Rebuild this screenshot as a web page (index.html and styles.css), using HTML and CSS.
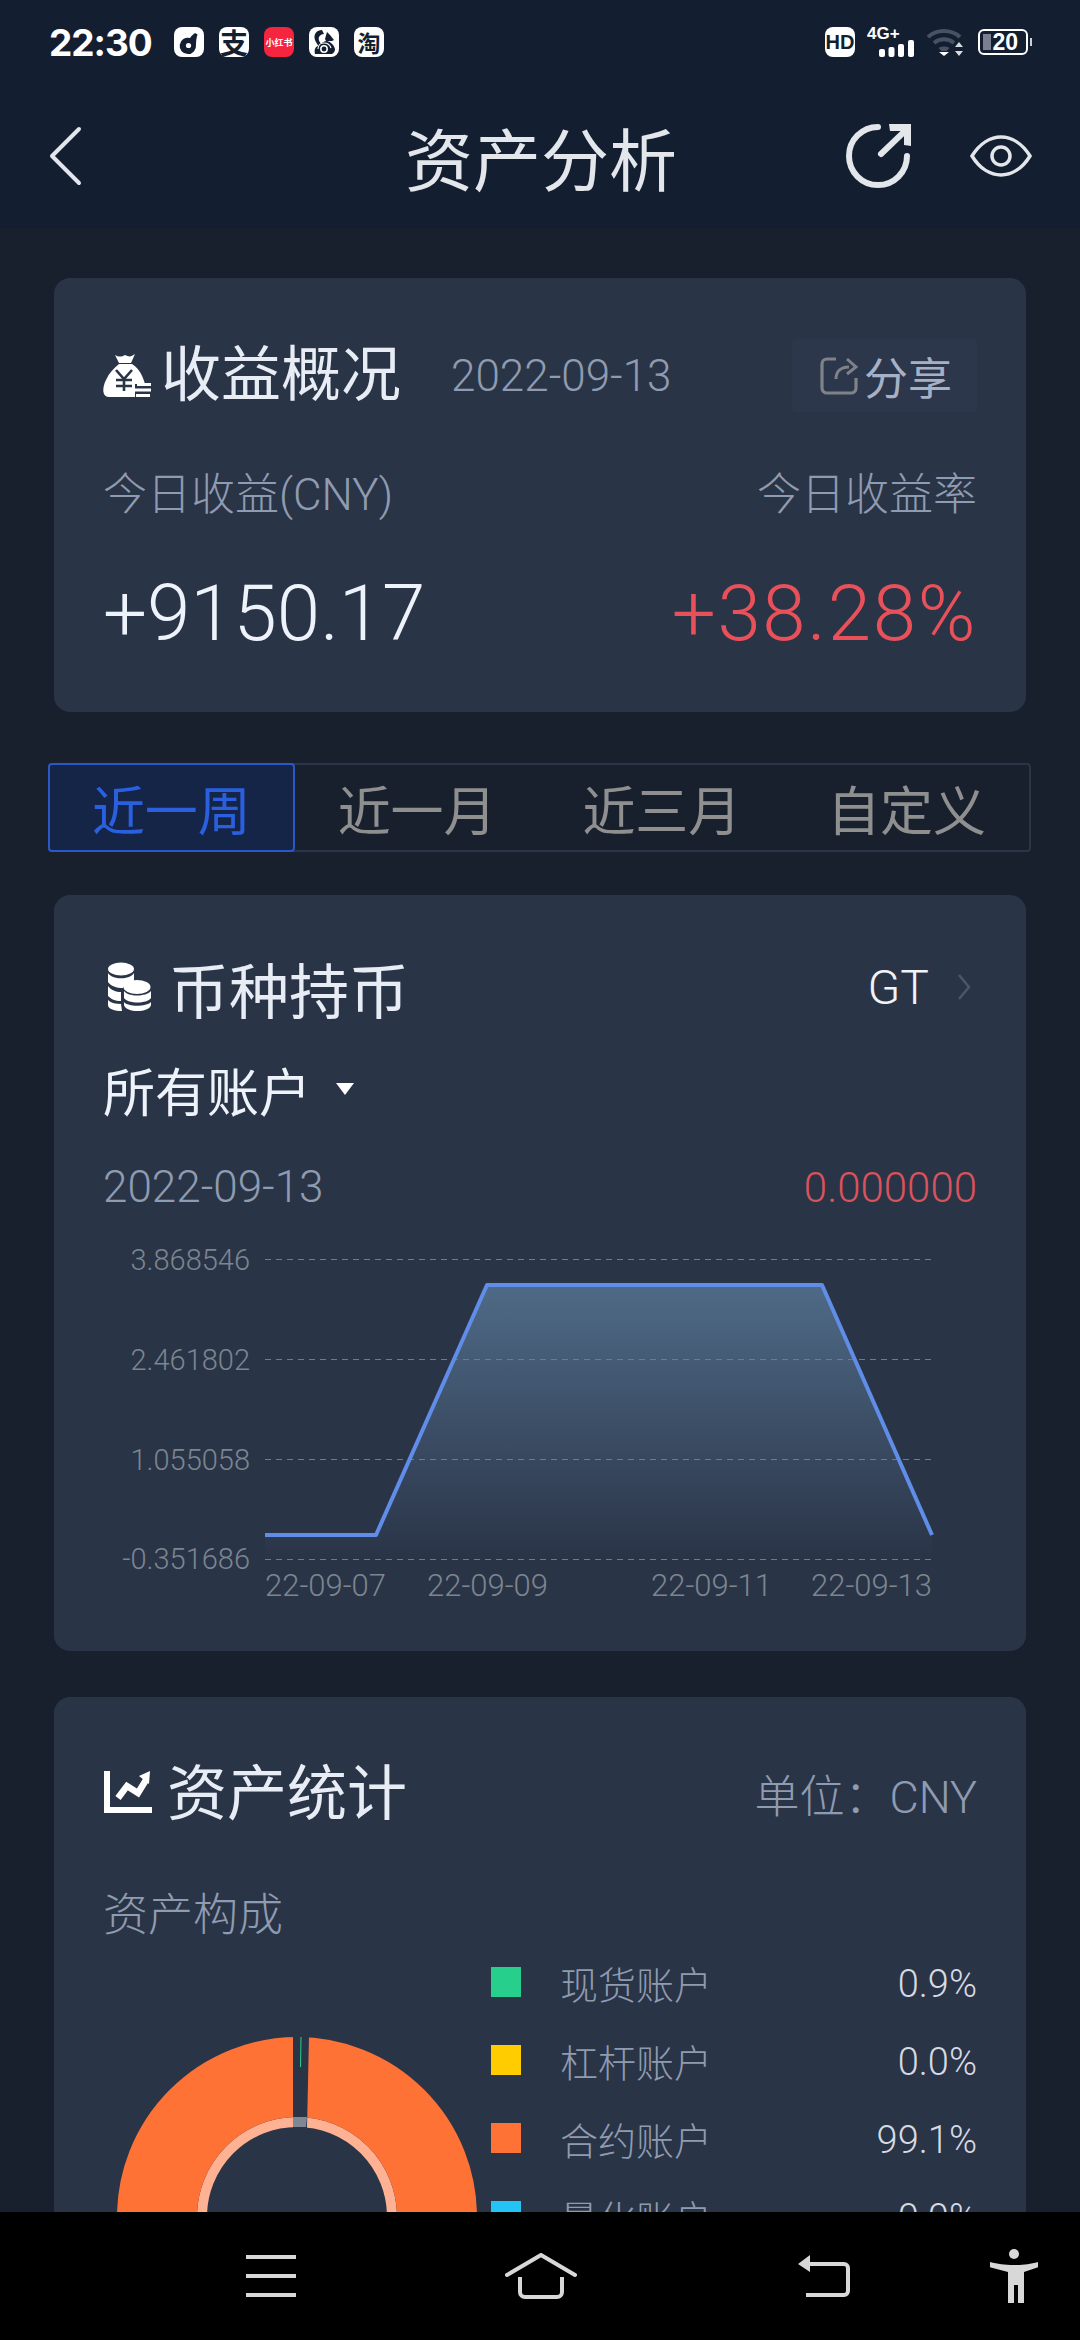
FILE: index.html
```html
<!DOCTYPE html>
<html lang="zh-CN">
    <head>
        <meta charset="UTF-8" />
        <title>资产分析</title>
        <link rel="stylesheet" href="styles.css">
    </head>

    <body>
        <div class="screen">
            <!-- status bar -->
            <div class="status">
                <span class="time">22:30</span>
                <span class="app">
                    <svg viewBox="0 0 30 30" width="30" height="30"><path d="M21 6c-1 1-3 2-5 5a8.200 8.200 0 1 0 6 7c0-4 .5-8 1.500-10.500z" fill="#131f30"/><circle cx="14.500" cy="18.500" r="2.600" fill="#fff"/></svg>
                </span>
                <span class="app app-zhi">支</span>
                <span class="app app-red">小红书</span>
                <span class="app">
                    <svg viewBox="0 0 30 30" width="30" height="30">
                        <path d="M13 3C8 3 4 7 6 13c1 3 3 4 3 6-3 1-4 4-3 8h17c2-1 3-3 3-5-1-4-4-7-8-8-3 0-5 2-6 3-1-2-3-4-2-7 1-2 3-3 5-3z" fill="#131f30"/>
                        <path d="M18 5l3 3 4 5-2 1h-6l-1-2z" fill="#131f30"/>
                        <circle cx="15" cy="22" r="3.200" fill="none" stroke="#fff" stroke-width="1.500"/>
                        <path d="M9 22c0-4 3-6 6-6s6 2 7 5" fill="none" stroke="#fff" stroke-width="1.200"/>
                    </svg>
                </span>
                <span class="app app-tao">淘</span>

                <span class="status-right">
                    <span class="app app-hd">HD</span>
                    <span class="signal">
                        <span class="signal-type">4G+</span>
                        <svg viewBox="0 0 35 17" width="35" height="17"><g fill="#fff"><rect x="0" y="9" width="6" height="8" rx="2"/><rect x="9.500" y="7" width="6" height="10" rx="2"/><rect x="19" y="4" width="6" height="13" rx="2"/><rect x="29" y="0" width="6" height="17" rx="2"/></g></svg>
                    </span>
                    <svg class="wifi" viewBox="0 0 37 30" width="37" height="30">
                        <g fill="none" stroke="#485263" stroke-width="4"><path d="M1 10c9-8 23-8 32 0"/><path d="M7 16c6-5 14-5 20 0"/></g>
                        <path d="M11.500 21c3-2 8-2 11 0l-3 3h-5z" fill="#485263"/>
                        <path d="M12 25h10l-5 4z" fill="#fff"/>
                        <path d="M32 15l4 5h-8zM32 29l-4-5h8z" fill="#d7dadf"/>
                    </svg>
                    <span class="battery"><span class="battery-fill"></span><span class="battery-num">20</span></span>
                </span>
            </div>

            <!-- title bar -->
            <div class="appbar">
                <svg class="back" viewBox="0 0 33 60" width="33" height="60"><path d="M30 3L3 30l27 27" fill="none" stroke="#e3e6ea" stroke-width="4" stroke-linecap="round" stroke-linejoin="round"/></svg>
                <h1 class="page-title">资产分析</h1>
                <svg class="share-big" viewBox="0 0 66 66" width="66" height="66">
                    <g fill="none" stroke="#e3e6ea" stroke-width="6" stroke-linecap="round">
                        <path d="M61 33a29 29 0 1 1-29-29"/>
                        <path d="M35 31L60 7"/>
                    </g>
                    <path d="M43 1h22v22l-7-1V8H44z" fill="#e3e6ea"/>
                </svg>
                <svg class="eye" viewBox="0 0 62 42" width="62" height="42">
                    <path d="M2 21C10 8 21 2 31 2s21 6 29 19c-8 13-19 19-29 19S10 34 2 21z" fill="none" stroke="#e3e6ea" stroke-width="3.500"/>
                    <circle cx="31" cy="21" r="9" fill="none" stroke="#e3e6ea" stroke-width="3.500"/>
                </svg>
            </div>

            <div class="main">
                <!-- 收益概况 -->
                <section class="card card-income">
                    <div class="card-head income-head">
                        <svg class="ico-bag" viewBox="0 0 48 44" width="48" height="44">
                            <path d="M12 1c4 2 6 2 10 0 4 2 6 2 10-1l-4 9h-12z" fill="#fff"/>
                            <path d="M16 10h13c8 5 11 13 13 20H32v13H6C-1 43-1 34 3 26c3-7 8-12 13-16z" fill="#fff"/>
                            <g fill="none" stroke="#2a3447" stroke-width="2.600"><path d="M13 16l8 9 8-9M21 25v12M13 26h16M13 32h16"/></g>
                            <g fill="#fff"><rect x="34" y="29" width="14" height="3"/><rect x="32" y="34.500" width="16" height="3"/><rect x="33" y="40" width="14" height="3"/></g>
                        </svg>
                        <h2 class="card-title">收益概况</h2>
                        <span class="head-date">2022-09-13</span>
                        <span class="share-btn">
                            <svg viewBox="0 0 38 38" width="38" height="38"><path d="M16 2H7a5 5 0 0 0-5 5v24a5 5 0 0 0 5 5h24a5 5 0 0 0 5-5V21" fill="none" stroke="#80828a" stroke-width="3.200"/><path d="M16 22c0-7 4-12 13-12" fill="none" stroke="#80828a" stroke-width="3"/><path d="M27 2l9 8-9 7" fill="none" stroke="#80828a" stroke-width="3"/></svg>
                            分享
                        </span>
                    </div>
                    <div class="between income-labels">
                        <span>今日收益(CNY)</span>
                        <span>今日收益率</span>
                    </div>
                    <div class="between income-values">
                        <span>+9150.17</span>
                        <span class="red">+38.28%</span>
                    </div>
                </section>

                <div class="tabs">
                    <span class="tab tab-on">近一周</span>
                    <span class="tab">近一月</span>
                    <span class="tab">近三月</span>
                    <span class="tab">自定义</span>
                </div>

                <!-- 币种持币 -->
                <section class="card card-coin">
                    <div class="card-head">
                        <svg class="ico-coins" viewBox="0 0 44 50" width="44" height="50">
                            <g fill="#fff">
                                <ellipse cx="14" cy="7" rx="13" ry="6.500"/>
                                <path d="M1 11c4 7 22 7 26 0v8c-4 1-9 3-11 7-7 0-12-2-15-6z"/>
                                <path d="M1 24c3 4 8 6 13 6v9c-6 0-10-2-13-5z"/>
                                <path d="M1 38c3 3 8 4 13 4l1 7c-7 0-14-2-14-6z"/>
                                <ellipse cx="30" cy="25" rx="13.500" ry="7"/>
                                <path d="M17 29c4 6 22 6 27 0v7c-4 6-23 6-27 0z"/>
                                <path d="M17 40c4 5 22 5 27 0v3c-2 8-25 8-27 0z"/>
                            </g>
                        </svg>
                        <h2 class="card-title">币种持币</h2>
                        <span class="coin-pick">GT</span>
                        <svg class="chev" viewBox="0 0 14 28" width="14" height="28"><path d="M2 2l10 12L2 26" fill="none" stroke="#4b566a" stroke-width="2.500"/></svg>
                    </div>
                    <div class="account">
                        所有账户
                        <span class="caret"></span>
                    </div>
                    <div class="between coin-date">
                        <span>2022-09-13</span>
                        <span class="red-soft">0.000000</span>
                    </div>
                    <svg class="chart" viewBox="54 1240 972 370" width="972" height="370">
                        <defs>
                            <linearGradient id="area" x1="0" y1="0" x2="0" y2="1">
                                <stop offset="0" stop-color="#5b7c9c" stop-opacity="0.75"/>
                                <stop offset="1" stop-color="#5b7c9c" stop-opacity="0"/>
                            </linearGradient>
                        </defs>
                        <path d="M265 1535H376L487 1285H822L932 1535V1559H265z" fill="url(#area)"/>
                        <g class="grid-line">
                            <path d="M265 1259.500H932"/>
                            <path d="M265 1359.500H932"/>
                            <path d="M265 1459.500H932"/>
                            <path d="M265 1559.500H932"/>
                        </g>
                        <path d="M265 1535H376L487 1285H822L932 1535" fill="none" stroke="#5f8de8" stroke-width="4" stroke-linejoin="round"/>
                        <g class="y-label">
                            <text x="250" y="1270">3.868546</text>
                            <text x="250" y="1370">2.461802</text>
                            <text x="250" y="1470">1.055058</text>
                            <text x="250" y="1569">-0.351686</text>
                        </g>
                        <g class="x-label">
                            <text x="265" y="1596">22-09-07</text>
                            <text x="427" y="1596">22-09-09</text>
                            <text x="651" y="1596">22-09-11</text>
                            <text x="811" y="1596">22-09-13</text>
                        </g>
                    </svg>
                </section>

                <!-- 资产统计 -->
                <section class="card card-stat">
                    <div class="card-head">
                        <svg class="ico-trend" viewBox="0 0 48 42" width="48" height="42">
                            <path d="M3 0v39h45" fill="none" stroke="#fff" stroke-width="6"/>
                            <path d="M14 27l9-12 11 7 8-13" fill="none" stroke="#fff" stroke-width="6.500"/>
                            <path d="M35 5l11-5-1 13z" fill="#fff"/>
                        </svg>
                        <h2 class="card-title">资产统计</h2>
                        <span class="unit">单位：CNY</span>
                    </div>
                    <div class="sub-title">资产构成</div>
                    <div class="compose">
                        <svg class="donut" viewBox="0 0 387 460" width="387" height="460">
                            <g transform="translate(193 274)">
                                <circle r="95" fill="none" stroke="#ffb293" stroke-width="10"/>
                                <circle r="140" fill="none" stroke="#ff7235" stroke-width="80"/>
                                <path d="M-4 -181L12 -181L10 -89L-4 -89z" fill="#2a3447"/>
                                <path d="M-4 -100L10 -100L9 -90L-4 -90z" fill="#7f8794"/>
                                <path d="M4 -180L3.500 -150" stroke="#26d08c" stroke-width="1"/>
                            </g>
                        </svg>
                        <div class="legend">
                            <div class="legend-row"><i class="swatch sw-green"></i><span class="legend-name">现货账户</span><span class="legend-val">0.9%</span></div>
                            <div class="legend-row"><i class="swatch sw-yellow"></i><span class="legend-name">杠杆账户</span><span class="legend-val">0.0%</span></div>
                            <div class="legend-row"><i class="swatch sw-orange"></i><span class="legend-name">合约账户</span><span class="legend-val">99.1%</span></div>
                            <div class="legend-row"><i class="swatch sw-blue"></i><span class="legend-name">量化账户</span><span class="legend-val">0.0%</span></div>
                        </div>
                    </div>
                </section>
            </div>

            <!-- system nav -->
            <div class="navbar">
                <svg class="nav-menu" viewBox="0 0 50 42" width="50" height="42"><path d="M0 2h50M0 21h50M0 40h50" stroke="#d8d8d8" stroke-width="4"/></svg>
                <svg class="nav-home" viewBox="0 0 72 46" width="72" height="46"><path d="M2 22L36 2l34 20" fill="none" stroke="#d8d8d8" stroke-width="4" stroke-linecap="round" stroke-linejoin="round"/><path d="M15 24v15a5 5 0 0 0 5 5h32a5 5 0 0 0 5-5V24" fill="none" stroke="#d8d8d8" stroke-width="4"/></svg>
                <svg class="nav-back" viewBox="0 0 52 42" width="52" height="42"><path d="M8 9h38a4 4 0 0 1 4 4v23a4 4 0 0 1-4 4H8" fill="none" stroke="#d8d8d8" stroke-width="4"/><path d="M0 9l12-9v17z" fill="#d8d8d8"/></svg>
                <svg class="nav-access" viewBox="0 0 48 54" width="48" height="54"><circle cx="24" cy="5" r="5" fill="#d8d8d8"/><path d="M0 13c8 2 14 3 24 3s16-1 24-3l1 5-15 5v31h-6V36h-4v18h-6V23L-1 18z" fill="#d8d8d8"/></svg>
            </div>
        </div>
    </body>
</html>
```

FILE: styles.css
```css
* {
    margin: 0;
    padding: 0;
    box-sizing: border-box;
}

html,
body {
    height: 100%;
    background: #18202d;
}

body {
    font-family: Roboto, "Noto Sans CJK SC", sans-serif;
    font-weight: 300;
    color: #e8ecf5;
    overflow: hidden;
}

.screen {
    width: 1080px;
    height: 2340px;
    display: flex;
    flex-direction: column;
    overflow: hidden;
}

/* status bar */
.status {
    height: 84px;
    flex: none;
    display: flex;
    align-items: center;
    padding-left: 49px;
    background: #131f30;
}

.time {
    width: 125px;
    font-family: Inter, sans-serif;
    font-size: 37px;
    font-weight: 700;
    letter-spacing: -1px;
    color: #fff;
}

.app {
    width: 30px;
    height: 30px;
    margin-right: 15px;
    display: flex;
    align-items: center;
    justify-content: center;
    border-radius: 8px;
    background: #fff;
    color: #131f30;
    font-family: "Noto Sans CJK SC", sans-serif;
    font-size: 25px;
    font-weight: 700;
    line-height: 1;
}

.app-zhi {
    font-size: 28px;
}

.app-red {
    background: #f5243f;
    color: #fff;
    font-size: 9px;
    white-space: nowrap;
}

.app-tao {
    font-size: 23px;
}

.status-right {
    margin-left: auto;
    padding-right: 52px;
    display: flex;
    align-items: center;
}

.app-hd {
    margin-right: 12px;
    font-family: "Liberation Sans", sans-serif;
    font-size: 20px;
    font-weight: 700;
}

.signal {
    width: 47px;
    height: 30px;
    margin-right: 13px;
    display: flex;
    flex-direction: column;
    align-items: flex-end;
    position: relative;
}

.signal-type {
    position: absolute;
    left: 0;
    top: -3px;
    font-family: "Liberation Sans", sans-serif;
    font-size: 17px;
    font-weight: 700;
    color: #fff;
}

.signal svg {
    margin-top: 13px;
}

.wifi {
    margin-right: 14px;
}

.battery {
    width: 50px;
    height: 26px;
    position: relative;
    display: flex;
    align-items: center;
    justify-content: flex-end;
    padding-right: 8px;
    border: 2px solid #fff;
    border-radius: 6px;
    color: #fff;
    font-family: "Liberation Sans", sans-serif;
    font-size: 23px;
    font-weight: 700;
}

.battery::after {
    content: "";
    position: absolute;
    right: -6px;
    top: 7px;
    width: 2px;
    height: 8px;
    background: #ccd;
}

.battery-fill {
    position: absolute;
    left: 3px;
    top: 3px;
    bottom: 3px;
    width: 8px;
    background: #7a8090;
}

.battery-num {
    position: relative;
}

/* title bar */
.appbar {
    height: 144px;
    flex: none;
    display: flex;
    align-items: center;
    padding-left: 49px;
    background: #131f30;
}

.page-title {
    width: 272px;
    margin-left: 323px;
    font-family: "Noto Sans CJK SC", sans-serif;
    font-size: 68px;
    font-weight: 400;
    white-space: nowrap;
    color: #e3e6ea;
}

.share-big {
    margin-left: 169px;
}

.eye {
    margin-left: 58px;
}

/* cards */
.main {
    flex: 1;
    min-height: 0;
    overflow: hidden;
    padding: 50px 54px 0;
}

.card {
    background: #2a3447;
    border-radius: 16px;
    padding: 0 49px;
}

.card-head {
    display: flex;
    align-items: center;
}

.card-title {
    font-family: "Noto Sans CJK SC", sans-serif;
    font-size: 60px;
    font-weight: 400;
    white-space: nowrap;
    color: #e8ecf5;
}

.between {
    display: flex;
    justify-content: space-between;
    align-items: center;
}

.card-income {
    height: 434px;
    padding-top: 61px;
}

.income-head {
    height: 73px;
}

.ico-bag {
    margin-right: 10px;
}

.income-head .card-title {
    margin-top: -12px;
}

.head-date {
    margin-left: 50px;
    font-size: 44px;
    color: #8f9bb0;
}

.share-btn {
    margin-left: auto;
    width: 185px;
    height: 73px;
    display: flex;
    align-items: center;
    justify-content: center;
    gap: 6px;
    padding-left: 3px;
    background: #2d374c;
    border-radius: 4px;
    font-family: "Noto Sans CJK SC", sans-serif;
    font-size: 44px;
    font-weight: 400;
    color: #a6b1c6;
}

.income-labels {
    height: 50px;
    margin-top: 54px;
    font-family: Roboto, "Noto Sans CJK SC", sans-serif;
    font-size: 44px;
    color: #8f9bb0;
}

.income-values {
    height: 90px;
    margin-top: 52px;
    font-size: 78px;
    color: #eef2fa;
}

.red {
    color: #e8505a;
    letter-spacing: 1.7px;
}

.red-soft {
    font-size: 42px;
    color: #d9535c;
}

/* range tabs */
.tabs {
    height: 89px;
    margin: 51px -5px 43px -6px;
    display: grid;
    grid-template-columns: repeat(4, 1fr);
    border: 2px solid #2c3548;
    border-radius: 4px;
}

.tab {
    display: flex;
    align-items: center;
    justify-content: center;
    margin: -2px 0;
    font-family: "Noto Sans CJK SC", sans-serif;
    font-size: 53px;
    font-weight: 400;
    color: #8f8f8f;
}

.tab-on {
    margin-left: -2px;
    border: 2px solid #2b58c8;
    border-radius: 4px;
    background: #152547;
    color: #2a5fe0;
}

/* coin card */
.card-coin {
    height: 756px;
    padding-top: 55px;
}

.card-coin .card-head {
    height: 74px;
}

.ico-coins {
    margin: 0 18px 0 4px;
}

.coin-pick {
    margin-left: auto;
    font-size: 48px;
    color: #f0f3f8;
}

.chev {
    margin: 0 6px 0 28px;
}

.account {
    height: 60px;
    margin-top: 35px;
    display: flex;
    align-items: center;
    font-family: "Noto Sans CJK SC", sans-serif;
    font-size: 52px;
    font-weight: 400;
    color: #eef2fa;
}

.caret {
    margin-left: 25px;
    width: 0;
    height: 0;
    border-left: 9px solid transparent;
    border-right: 9px solid transparent;
    border-top: 12px solid #fff;
}

.coin-date {
    height: 50px;
    margin-top: 43px;
    font-size: 44px;
    color: #8f9bb0;
}

.chart {
    display: block;
    margin: 28px -49px 0;
}

.grid-line path {
    stroke: #6f7a8b;
    stroke-width: 1;
    stroke-dasharray: 6 5;
}

.y-label text {
    font-size: 29px;
    fill: #7c8590;
    text-anchor: end;
}

.x-label text {
    font-size: 31px;
    fill: #7c8590;
}

/* stats card */
.card-stat {
    margin-top: 46px;
    height: 800px;
    padding-top: 56px;
}

.card-stat .card-head {
    height: 70px;
}

.ico-trend {
    margin: 8px 15px 0 1px;
}

.unit {
    margin-left: auto;
    padding-top: 10px;
    font-size: 45px;
    color: #8f9bb0;
}

.sub-title {
    height: 50px;
    margin-top: 63px;
    display: flex;
    align-items: center;
    font-family: "Noto Sans CJK SC", sans-serif;
    font-size: 45px;
    color: #8f9bb0;
}

.compose {
    margin-top: 7px;
    margin-left: 1px;
    display: flex;
}

.donut {
    flex: none;
}

.legend {
    flex: 1;
}

.legend-row {
    height: 78px;
    display: flex;
    align-items: center;
}

.swatch {
    width: 30px;
    height: 30px;
    margin-right: 39px;
}

.sw-green {
    background: #26d08c;
}

.sw-yellow {
    background: #ffcc00;
}

.sw-orange {
    background: #ff7235;
}

.sw-blue {
    background: #22c4f5;
}

.legend-name {
    font-family: "Noto Sans CJK SC", sans-serif;
    font-size: 38px;
    color: #8f9bb0;
}

.legend-val {
    margin-left: auto;
    padding-top: 4px;
    font-size: 38px;
    color: #d5dae3;
}

/* system nav */
.navbar {
    height: 128px;
    flex: none;
    display: flex;
    align-items: center;
    padding-left: 246px;
    background: #000;
}

.nav-home {
    margin-left: 209px;
}

.nav-back {
    margin-left: 221px;
}

.nav-access {
    margin-left: 140px;
}
```
